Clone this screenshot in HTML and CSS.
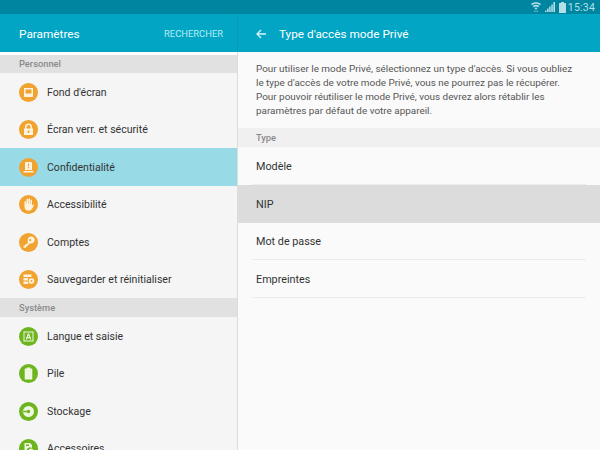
FILE: index.html
```html
<!DOCTYPE html>
<html lang="fr">
<head>
  <meta charset="UTF-8">
  <title>Paramètres</title>
  <link rel="stylesheet" href="styles.css">
</head>
<body>

<div class="status-bar">
  <svg class="wifi" width="10" height="10" viewBox="0 0 10 10"><path d="M0 2C2.800 -.5 7.200 -.5 10 2L9 3.200C6.600 1.200 3.400 1.200 1 3.200zM1.700 4C3.700 2.400 6.300 2.400 8.300 4L7.300 5.200C5.900 4.100 4.100 4.100 2.700 5.200zM3.400 6C4.400 5.300 5.600 5.300 6.600 6L5 7.800z"/><path d="M3.500 8.500H4.300V10H3.500zM5.700 8.500H6.500V10H5.700z"/></svg>
  <svg class="signal" width="10" height="10" viewBox="0 0 10 10"><path d="M0 8.500H1.500V10H0zM2.100 6.500H3.600V10H2.100zM4.200 4.500H5.700V10H4.200zM6.300 2.500H7.800V10H6.300zM8.400 0H10V10H8.400z"/></svg>
  <svg class="battery" width="7" height="11" viewBox="0 0 7 11"><path d="M2 0H5V1H6.500Q7 1 7 1.500V10.500Q7 11 6.500 11H.5Q0 11 0 10.500V1.500Q0 1 .5 1H2z"/></svg>
  <span class="clock">15:34</span>
</div>

<div class="panes">
  <aside class="side">
    <header class="side-head">
      <span class="side-title">Paramètres</span>
      <span class="search">RECHERCHER</span>
    </header>
    <div class="side-list">
      <div class="section">Personnel</div>
      <div class="row">
        <span class="icon orange"><svg viewBox="0 0 19 19"><path fill-rule="evenodd" d="M5 5H14V14H5zM6.500 6.500V10.500H12.500V6.500z"/></svg></span>
        Fond d'écran
      </div>
      <div class="row">
        <span class="icon orange"><svg viewBox="0 0 19 19"><path fill-rule="evenodd" d="M6 8.500V7A3.500 3.500 0 0 1 13 7V8.500H14V15H5V8.500zM7.500 8.500H11.500V7A2 2 0 0 0 7.500 7zM8.700 10.500V13H10.300V10.500z"/></svg></span>
        Écran verr. et sécurité
      </div>
      <div class="row active">
        <span class="icon orange"><svg viewBox="0 0 19 19"><path fill-rule="evenodd" d="M7 4H12Q13 4 13 5V12H6V5Q6 4 7 4zM8.900 5.500V8H10.100V5.500zM8.900 9V10.200H10.100V9zM4.500 13H14.500V14.500H4.500z"/></svg></span>
        Confidentialité
      </div>
      <div class="row">
        <span class="icon orange"><svg viewBox="0 0 19 19"><path d="M5.500 7Q5.500 6 6.300 6T7.100 7V9.200H7.500V4.800Q7.500 3.800 8.300 3.800T9.100 4.800V8.800H9.500V4.200Q9.500 3.200 10.300 3.200T11.100 4.200V9H11.500V5.500Q11.500 4.600 12.200 4.600T13 5.500V11Q13.800 9.500 14.500 9.300 15.200 9.400 15 10.200L13 14Q12 15.800 9.500 15.800 6 15.800 5.500 12z"/></svg></span>
        Accessibilité
      </div>
      <div class="row">
        <span class="icon orange"><svg viewBox="0 0 19 19"><path fill-rule="evenodd" d="M8.700 7.500A3.500 3.500 0 1 1 11 10.300L6.500 14.800H4.500V12.800H6V11.300H7.500L8.800 10zM11.200 6A1.100 1.100 0 1 0 11.200 8.200 1.100 1.100 0 0 0 11.200 6z"/></svg></span>
        Comptes
      </div>
      <div class="row">
        <span class="icon orange"><svg viewBox="0 0 19 19"><path d="M4.500 4.500H12.500V7H4.500zM4.500 8H9.500A4 4 0 0 0 8.600 10.500H4.500zM4.500 11.500H8.800A4 4 0 0 0 9.800 14H4.500z"/><path fill-rule="evenodd" d="M12.500 8.200A2.800 2.800 0 1 1 12.500 13.800 2.800 2.800 0 0 1 12.500 8.200zM12.500 10A1 1 0 1 0 12.500 12 1 1 0 0 0 12.500 10z"/></svg></span>
        Sauvegarder et réinitialiser
      </div>
      <div class="section">Système</div>
      <div class="row">
        <span class="icon green"><svg viewBox="0 0 19 19"><path fill-rule="evenodd" d="M4.500 4.500H14.500V14.500H4.500zM5.500 5.500V13.500H13.500V5.500zM8.800 6.500H10.200L12.300 12.500H11L10.600 11.200H8.400L8 12.500H6.700zM9.500 8L8.800 10.100H10.200z"/></svg></span>
        Langue et saisie
      </div>
      <div class="row">
        <span class="icon green"><svg viewBox="0 0 19 19"><path d="M7.800 3.500H11.200V4.500H12.800Q13.300 4.500 13.300 5V15Q13.300 15.500 12.800 15.500H6.200Q5.700 15.500 5.700 15V5Q5.700 4.500 6.200 4.500H7.800z"/></svg></span>
        Pile
      </div>
      <div class="row">
        <span class="icon green"><svg viewBox="0 0 19 19"><path fill-rule="evenodd" d="M9.500 4A5.500 5.500 0 1 1 9.500 15 5.500 5.500 0 0 1 9.500 4zM9.500 7.800A1.700 1.700 0 1 0 9.500 11.200 1.700 1.700 0 0 0 9.500 7.800zM3.500 8.800V10.200H8V8.800z"/></svg></span>
        Stockage
      </div>
      <div class="row">
        <span class="icon green"><svg viewBox="0 0 19 19"><path fill-rule="evenodd" d="M5.500 4H11L13 6V9A3 3 0 0 0 9 14.500H5.500zM7 7H10V5.500H7z"/><circle cx="12" cy="12" r="2.500"/></svg></span>
        Accessoires
      </div>
    </div>
  </aside>

  <main class="detail">
    <header class="detail-head">
      <svg class="back" width="10" height="10" viewBox="0 0 10 10"><path d="M10 5H1.200M5 1L1 5 5 9" fill="none" stroke="currentColor" stroke-width="1.300"/></svg>
      <span class="detail-title">Type d'accès mode Privé</span>
    </header>
    <div class="detail-body">
      <p class="intro">Pour utiliser le mode Privé, sélectionnez un type d'accès. Si vous oubliez le type d'accès de votre mode Privé, vous ne pourrez pas le récupérer. Pour pouvoir réutiliser le mode Privé, vous devrez alors rétablir les paramètres par défaut de votre appareil.</p>
      <div class="type-section">Type</div>
      <div class="option">Modèle</div>
      <div class="option selected">NIP</div>
      <div class="option">Mot de passe</div>
      <div class="option">Empreintes</div>
    </div>
  </main>
</div>

</body>
</html>
```

FILE: styles.css
```css
html, body {
  margin: 0;
  padding: 0;
}
body {
  width: 600px;
  height: 450px;
  overflow: hidden;
  font-family: Roboto, "Liberation Sans", sans-serif;
  background: #fafafa;
  color: #333;
}
.status-bar {
  height: 14px;
  background: #0085a0;
  color: #b5dfe8;
  fill: #b5dfe8;
  display: flex;
  align-items: center;
  justify-content: flex-end;
  padding-right: 5px;
}
.wifi,
.signal {
  margin-right: 4px;
}
.battery {
  margin-right: 2px;
}
.clock {
  font-size: 10.5px;
  letter-spacing: 0.2px;
}
.panes {
  display: flex;
  height: 436px;
}
.side {
  width: 238px;
  flex: none;
  background: #f5f5f5;
}
.side-head {
  box-sizing: border-box;
  height: 38px;
  background: #02a5c4;
  border-right: 1px solid #0a9ab6;
  display: flex;
  align-items: center;
  justify-content: space-between;
  padding: 1px 14px 0 19px;
}
.side-title {
  color: #fff;
  font-size: 11.8px;
}
.search {
  color: #b3edf5;
  font-size: 9.4px;
}
.side-list {
  padding-top: 3px;
  background: linear-gradient(#fff 3px, #f5f5f5 3px);
  border-right: 1px solid #dcdcdc;
  height: 398px;
  box-sizing: border-box;
}
.section {
  height: 19px;
  background: #e1e1e1;
  color: #8a8a8a;
  font-size: 9.3px;
  font-weight: 500;
  line-height: 19px;
  padding-left: 19px;
}
.section:first-child {
  height: 18px;
  line-height: 18px;
}
.row {
  box-sizing: border-box;
  height: 37.5px;
  display: flex;
  align-items: center;
  font-size: 10.55px;
  padding: 1px 0 0 19px;
}
.row.active {
  background: #98dbe7;
}
.icon {
  width: 19px;
  height: 19px;
  border-radius: 50%;
  margin-right: 9px;
  flex: none;
  fill: #fdf3e0;
}
.icon svg {
  display: block;
  width: 19px;
  height: 19px;
}
.orange {
  background: #f0a32e;
}
.green {
  background: #6db41e;
  fill: #eef7e0;
}
.detail {
  flex: 1;
  min-width: 0;
}
.detail-head {
  box-sizing: border-box;
  height: 38px;
  background: #02a5c4;
  color: #d9f4f8;
  display: flex;
  align-items: center;
  padding: 1px 0 0 18px;
}
.back {
  margin-right: 13px;
}
.detail-title {
  color: #fff;
  font-size: 11.8px;
}
.intro {
  margin: 0;
  height: 76px;
  box-sizing: border-box;
  padding: 10px 22px 0 18px;
  font-size: 9.92px;
  line-height: 14px;
  color: #555;
}
.type-section {
  height: 19px;
  background: #f0f0f0;
  color: #8a8a8a;
  font-size: 9.3px;
  font-weight: 500;
  line-height: 19px;
  padding-left: 18px;
}
.option {
  box-sizing: border-box;
  height: 37.75px;
  display: flex;
  align-items: center;
  font-size: 10.8px;
  padding: 1px 0 0 18px;
  position: relative;
}
.option::after {
  content: "";
  position: absolute;
  left: 14px;
  right: 14px;
  bottom: 0;
  height: 1px;
  background: #ececec;
}
.option.selected {
  background: #dcdcdc;
}
.option.selected::after {
  display: none;
}
```
